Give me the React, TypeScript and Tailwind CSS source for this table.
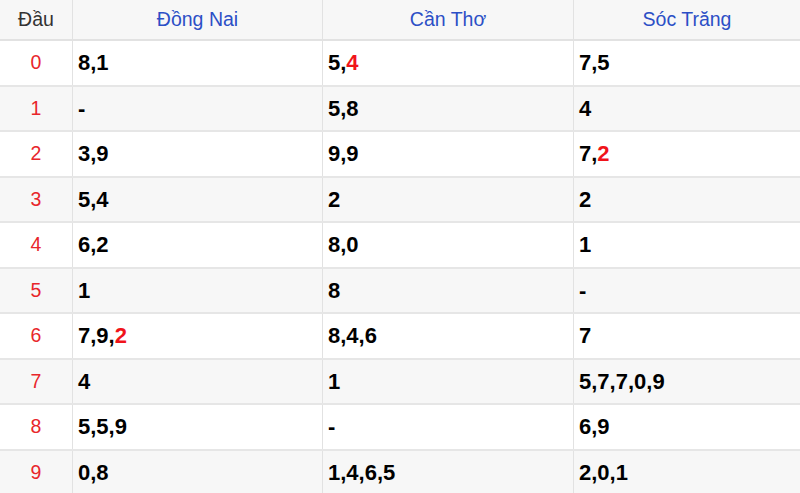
type Part = { v: string; red?: boolean };

const rows: Part[][][] = [
  [[{ v: '8,1' }], [{ v: '5,' }, { v: '4', red: true }], [{ v: '7,5' }]],
  [[{ v: '-' }], [{ v: '5,8' }], [{ v: '4' }]],
  [[{ v: '3,9' }], [{ v: '9,9' }], [{ v: '7,' }, { v: '2', red: true }]],
  [[{ v: '5,4' }], [{ v: '2' }], [{ v: '2' }]],
  [[{ v: '6,2' }], [{ v: '8,0' }], [{ v: '1' }]],
  [[{ v: '1' }], [{ v: '8' }], [{ v: '-' }]],
  [[{ v: '7,9,' }, { v: '2', red: true }], [{ v: '8,4,6' }], [{ v: '7' }]],
  [[{ v: '4' }], [{ v: '1' }], [{ v: '5,7,7,0,9' }]],
  [[{ v: '5,5,9' }], [{ v: '-' }], [{ v: '6,9' }]],
  [[{ v: '0,8' }], [{ v: '1,4,6,5' }], [{ v: '2,0,1' }]],
];

const provinces = ['Đồng Nai', 'Cần Thơ', 'Sóc Trăng'];

export default function App() {
  return (
    <div className="w-[800px] h-[493px] overflow-hidden bg-white font-['Liberation_Sans',Arial,sans-serif]">
      {/* Header */}
      <div className="grid grid-cols-[73px_250px_251px_226px] h-[41px] bg-[#f7f7f7] border-b-2 border-[#e2e2e2]">
        <div className="flex items-center justify-center border-r border-[#e2e2e2] text-[19.5px] text-[#333]">
          Đầu
        </div>
        {provinces.map((p, i) => (
          <div
            key={p}
            className={`flex items-center justify-center text-[19.5px] text-[#2c4fc6] ${i < 2 ? 'border-r border-[#e2e2e2]' : ''}`}
          >
            {p}
          </div>
        ))}
      </div>

      {/* Rows */}
      {rows.map((row, idx) => (
        <div
          key={idx}
          className={`grid grid-cols-[73px_250px_251px_226px] h-[45.5px] border-b-2 border-[#e6e6e6] ${idx % 2 === 1 ? 'bg-[#f7f7f7]' : 'bg-white'}`}
        >
          <div className="flex items-center justify-center border-r border-[#e2e2e2] text-[19.5px] text-[#e8262b]">
            {idx}
          </div>
          {row.map((cell, c) => (
            <div
              key={c}
              className={`flex items-center pl-[5px] text-[22px] font-bold text-black ${c < 2 ? 'border-r border-[#e2e2e2]' : ''}`}
            >
              {cell.map((part, k) => (
                <span key={k} className={part.red ? 'text-[#f0141a]' : ''}>
                  {part.v}
                </span>
              ))}
            </div>
          ))}
        </div>
      ))}
    </div>
  );
}
